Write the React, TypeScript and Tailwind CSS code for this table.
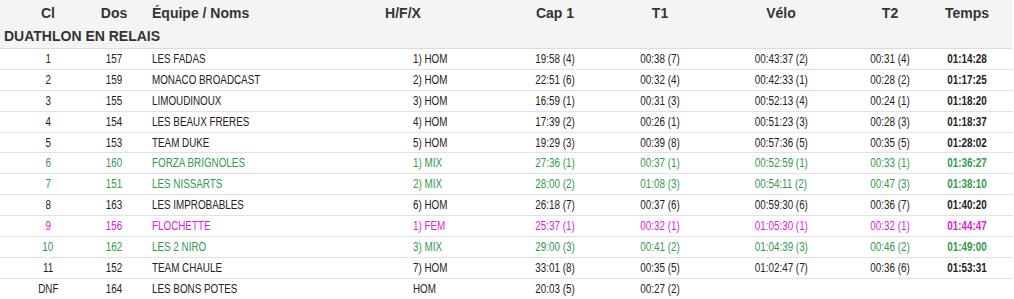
import React from "react";

type Row = {
  cl: string;
  dos: string;
  eq: string;
  hfx: string;
  cap1: string;
  t1: string;
  velo: string;
  t2: string;
  temps: string;
  c: "n" | "g" | "m";
};

const rows: Row[] = [
  { cl: "1", dos: "157", eq: "LES FADAS", hfx: "1) HOM", cap1: "19:58 (4)", t1: "00:38 (7)", velo: "00:43:37 (2)", t2: "00:31 (4)", temps: "01:14:28", c: "n" },
  { cl: "2", dos: "159", eq: "MONACO BROADCAST", hfx: "2) HOM", cap1: "22:51 (6)", t1: "00:32 (4)", velo: "00:42:33 (1)", t2: "00:28 (2)", temps: "01:17:25", c: "n" },
  { cl: "3", dos: "155", eq: "LIMOUDINOUX", hfx: "3) HOM", cap1: "16:59 (1)", t1: "00:31 (3)", velo: "00:52:13 (4)", t2: "00:24 (1)", temps: "01:18:20", c: "n" },
  { cl: "4", dos: "154", eq: "LES BEAUX FRERES", hfx: "4) HOM", cap1: "17:39 (2)", t1: "00:26 (1)", velo: "00:51:23 (3)", t2: "00:28 (3)", temps: "01:18:37", c: "n" },
  { cl: "5", dos: "153", eq: "TEAM DUKE", hfx: "5) HOM", cap1: "19:29 (3)", t1: "00:39 (8)", velo: "00:57:36 (5)", t2: "00:35 (5)", temps: "01:28:02", c: "n" },
  { cl: "6", dos: "160", eq: "FORZA BRIGNOLES", hfx: "1) MIX", cap1: "27:36 (1)", t1: "00:37 (1)", velo: "00:52:59 (1)", t2: "00:33 (1)", temps: "01:36:27", c: "g" },
  { cl: "7", dos: "151", eq: "LES NISSARTS", hfx: "2) MIX", cap1: "28:00 (2)", t1: "01:08 (3)", velo: "00:54:11 (2)", t2: "00:47 (3)", temps: "01:38:10", c: "g" },
  { cl: "8", dos: "163", eq: "LES IMPROBABLES", hfx: "6) HOM", cap1: "26:18 (7)", t1: "00:37 (6)", velo: "00:59:30 (6)", t2: "00:36 (7)", temps: "01:40:20", c: "n" },
  { cl: "9", dos: "156", eq: "FLOCHETTE", hfx: "1) FEM", cap1: "25:37 (1)", t1: "00:32 (1)", velo: "01:05:30 (1)", t2: "00:32 (1)", temps: "01:44:47", c: "m" },
  { cl: "10", dos: "162", eq: "LES 2 NIRO", hfx: "3) MIX", cap1: "29:00 (3)", t1: "00:41 (2)", velo: "01:04:39 (3)", t2: "00:46 (2)", temps: "01:49:00", c: "g" },
  { cl: "11", dos: "152", eq: "TEAM CHAULE", hfx: "7) HOM", cap1: "33:01 (8)", t1: "00:35 (5)", velo: "01:02:47 (7)", t2: "00:36 (6)", temps: "01:53:31", c: "n" },
  { cl: "DNF", dos: "164", eq: "LES BONS POTES", hfx: "HOM", cap1: "20:03 (5)", t1: "00:27 (2)", velo: "", t2: "", temps: "", c: "n" },
];

const colorCls: Record<Row["c"], string> = {
  n: "text-[#222222]",
  g: "text-[#2f9a4c]",
  m: "text-[#e020e0]",
};

const grid = "grid grid-cols-[96px_36px_182px_178px_126px_84px_158px_60px_94px]";

function C({ children, bold }: { children: React.ReactNode; bold?: boolean }) {
  return (
    <div className="flex justify-center whitespace-nowrap">
      <span className={`inline-block scale-x-[0.82] origin-center ${bold ? "font-bold" : ""}`}>{children}</span>
    </div>
  );
}

function L({ children, pad }: { children: React.ReactNode; pad: string }) {
  return (
    <div className={`${pad} whitespace-nowrap`}>
      <span className="inline-block scale-x-[0.82] origin-left">{children}</span>
    </div>
  );
}

export default function App() {
  return (
    <div className="w-[1014px] h-[299px] bg-white overflow-hidden" style={{ fontFamily: '"Liberation Sans", Arial, sans-serif' }}>
      <div className="w-[1012px] bg-[#f4f4f4] border-b border-[#dcdcdc]">
        <div className={`${grid} h-[26px] items-center text-[14px] font-bold text-[#333333]`}>
          <div className="text-center">Cl</div>
          <div className="text-center">Dos</div>
          <div className="pl-[20px]">Équipe / Noms</div>
          <div className="text-center">H/F/X</div>
          <div className="text-center">Cap 1</div>
          <div className="text-center">T1</div>
          <div className="text-center">Vélo</div>
          <div className="text-center">T2</div>
          <div className="text-center">Temps</div>
        </div>
        <div className="h-[22px] flex items-center pl-[4px] pb-[1px] text-[14px] font-bold text-[#333333]">
          DUATHLON EN RELAIS
        </div>
      </div>
      <div className="w-[1013px] text-[12px]">
        {rows.map((r) => (
          <div key={r.cl} className={`${grid} h-[20.9px] items-center border-b border-[#e2e2e2] ${colorCls[r.c]}`}>
            <C>{r.cl}</C>
            <C>{r.dos}</C>
            <L pad="pl-[20px]">{r.eq}</L>
            <L pad="pl-[99px]">{r.hfx}</L>
            <C>{r.cap1}</C>
            <C>{r.t1}</C>
            <C>{r.velo}</C>
            <C>{r.t2}</C>
            <C bold>{r.temps}</C>
          </div>
        ))}
      </div>
    </div>
  );
}
